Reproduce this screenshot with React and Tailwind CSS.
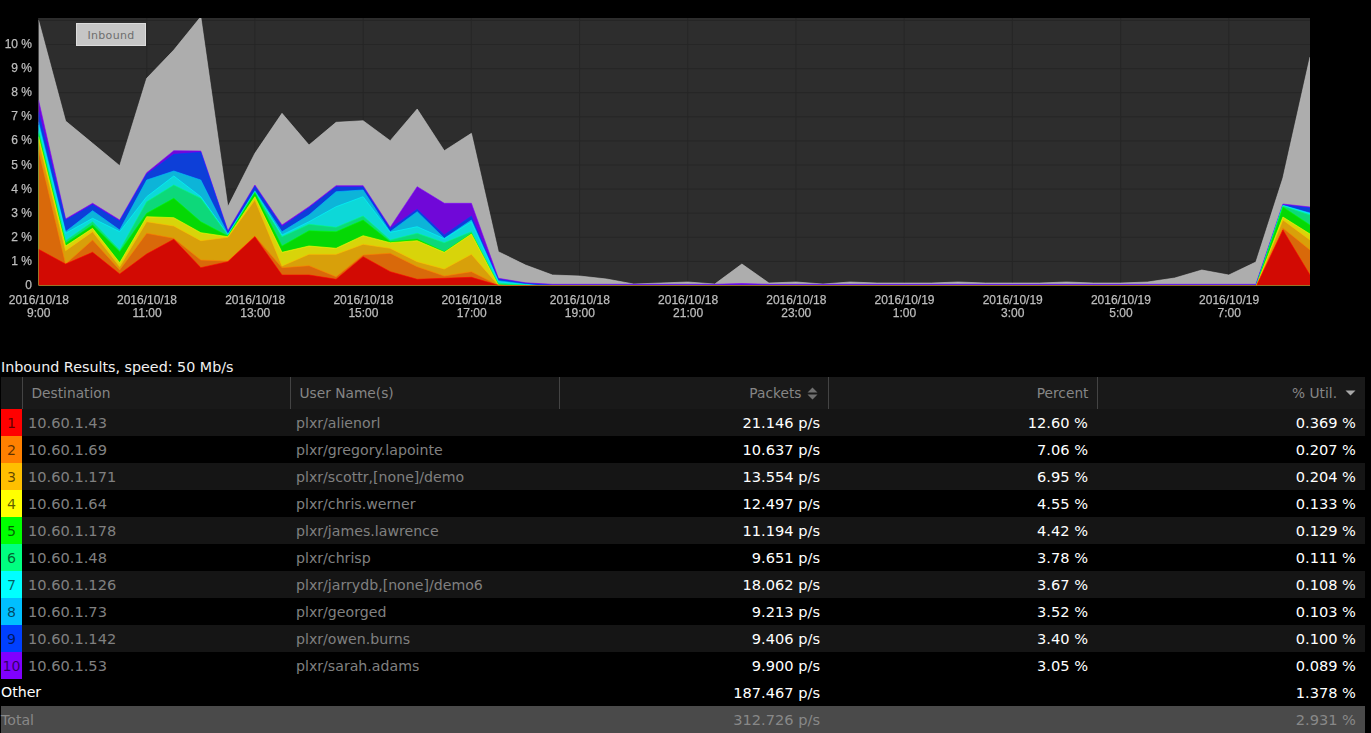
import React from "react";

const COLORS = [
  ["#d20a03", "#ff0000"],
  ["#d9690a", "#ff8000"],
  ["#d8a00a", "#ffbf00"],
  ["#d8d40a", "#ffff00"],
  ["#05d805", "#00ff00"],
  ["#0dd87a", "#00ff80"],
  ["#0dd8d8", "#00ffff"],
  ["#0db4d8", "#00bfff"],
  ["#0d3fd8", "#0040ff"],
  ["#7008d8", "#8000ff"],
  ["#adadad", "#c4c4c4"],
];

const Z = [
  [748, 450, 420, 410, 400, 392, 375, 365, 335, 300, 60],
  [792, 792, 752, 738, 730, 722, 700, 695, 661, 657, 363],
  [757, 720, 695, 685, 675, 665, 655, 632, 614, 610, 430],
  [822, 810, 800, 788, 755, 750, 695, 690, 664, 660, 497],
  [762, 700, 665, 650, 640, 605, 590, 540, 523, 518, 235],
  [718, 715, 678, 653, 595, 555, 528, 513, 463, 452, 150],
  [803, 780, 722, 698, 665, 595, 590, 540, 457, 453, 50],
  [785, 783, 712, 710, 708, 706, 704, 702, 696, 692, 620],
  [710, 708, 600, 590, 578, 576, 575, 572, 559, 555, 460],
  [825, 803, 798, 757, 738, 710, 705, 695, 680, 675, 340],
  [825, 797, 763, 738, 692, 673, 665, 645, 624, 620, 435],
  [838, 830, 763, 745, 695, 682, 620, 575, 561, 557, 367],
  [770, 765, 733, 707, 660, 648, 590, 570, 561, 557, 362],
  [815, 760, 745, 728, 725, 720, 697, 695, 686, 682, 422],
  [838, 800, 785, 722, 717, 700, 680, 635, 628, 560, 327],
  [835, 828, 807, 757, 755, 728, 716, 715, 705, 610, 452],
  [832, 815, 763, 702, 700, 695, 665, 660, 648, 610, 400],
  [856, 856, 856, 856, 855, 850, 845, 842, 838, 835, 755],
].map((r) => r.map((v) => v / 3));

const low = (g, p = 284.3) => [287, 287, 287, 287, 287, 287, 287, 287, 285.2, p, g];
const GREY_TAIL = [
  265, 275, 276, 279, 284, 283, 282, 284, 264, 283, 282, 284, 282, 283, 283, 283, 282, 283, 283, 283, 282, 283, 283,
  282, 278, 270, 275, 262,
];
const TAIL = GREY_TAIL.map((g, i) =>
  i === 0 ? [286, 286, 286, 286, 285.4, 285, 284.6, 284.2, 283.4, 282.8, g] : low(g, i === 8 ? 283.5 : 284.3)
);
const END = [
  [230, 228, 220, 217, 207, 206, 205.6, 205.3, 205, 204, 178],
  [275, 250, 240, 234, 225, 215, 213.5, 213, 208, 207, 57],
];
const DATA = [...Z, ...TAIL, ...END];
const X0 = 38.5;
const X1 = 1310;
const xAt = (i) => X0 + ((X1 - X0) * i) / 47;
const Y0 = 285.5;

const TIMES = [
  ["2016/10/18", "9:00"],
  ["2016/10/18", "11:00"],
  ["2016/10/18", "13:00"],
  ["2016/10/18", "15:00"],
  ["2016/10/18", "17:00"],
  ["2016/10/18", "19:00"],
  ["2016/10/18", "21:00"],
  ["2016/10/18", "23:00"],
  ["2016/10/19", "1:00"],
  ["2016/10/19", "3:00"],
  ["2016/10/19", "5:00"],
  ["2016/10/19", "7:00"],
];

function Chart() {
  return (
    <div className="relative h-[358px] w-[1371px]">
      <svg width="1371" height="358" className="block blur-[0.35px]">
        <defs>
          <clipPath id="plot">
            <rect x={X0} y="18" width={X1 - X0} height={Y0 - 18} />
          </clipPath>
        </defs>
        <rect x={X0} y="18" width={X1 - X0} height={Y0 - 18} fill="#2d2d2d" />
        {Array.from({ length: 11 }, (_, i) => (
          <line key={i} x1={X0} x2={X1} y1={Y0 - 24.1 * (i + 1)} y2={Y0 - 24.1 * (i + 1)} stroke="#262626" />
        ))}
        {TIMES.map((_, i) => (
          <line key={i} x1={xAt(i * 4)} x2={xAt(i * 4)} y1="18" y2={Y0} stroke="#262626" />
        ))}
        <g clipPath="url(#plot)">
          {[10, 9, 8, 7, 6, 5, 4, 3, 2, 1, 0].map((l) => {
            const top = DATA.map((d, i) => `${xAt(i).toFixed(1)},${d[l].toFixed(1)}`).join(" ");
            return (
              <g key={l}>
                <polygon points={`${X0},${Y0} ${top} ${X1},${Y0}`} fill={COLORS[l][0]} />
                <polyline points={top} fill="none" stroke={COLORS[l][1]} strokeWidth="1" strokeOpacity="0.6" />
              </g>
            );
          })}
        </g>
        <g fontFamily="'Liberation Sans', Arial, sans-serif" fontSize="12" fill="#bdbdbd" stroke="#bdbdbd" strokeWidth="0.25">
          {Array.from({ length: 11 }, (_, i) => (
            <text key={i} x="32" y={Y0 - 24.1 * i + 3.5} textAnchor="end">
              {i === 0 ? "0" : `${i} %`}
            </text>
          ))}
          {TIMES.map(([d, t], i) => (
            <text key={i} x={xAt(i * 4) + 0.3} textAnchor="middle">
              <tspan x={xAt(i * 4) + 0.3} y="304">{d}</tspan>
              <tspan x={xAt(i * 4) + 0.3} y="317">{t}</tspan>
            </text>
          ))}
        </g>
      </svg>
      <div className="absolute left-[76px] top-[23px] flex h-[23px] w-[70px] items-center justify-center border border-[#dcdcdc] bg-[#c6c6c6] pt-[3px] text-[11px] tracking-[0.3px] text-[#6e6e6e]">
        Inbound
      </div>
    </div>
  );
}

const ROWS = [
  ["10.60.1.43", "plxr/alienorl", "21.146 p/s", "12.60 %", "0.369 %"],
  ["10.60.1.69", "plxr/gregory.lapointe", "10.637 p/s", "7.06 %", "0.207 %"],
  ["10.60.1.171", "plxr/scottr,[none]/demo", "13.554 p/s", "6.95 %", "0.204 %"],
  ["10.60.1.64", "plxr/chris.werner", "12.497 p/s", "4.55 %", "0.133 %"],
  ["10.60.1.178", "plxr/james.lawrence", "11.194 p/s", "4.42 %", "0.129 %"],
  ["10.60.1.48", "plxr/chrisp", "9.651 p/s", "3.78 %", "0.111 %"],
  ["10.60.1.126", "plxr/jarrydb,[none]/demo6", "18.062 p/s", "3.67 %", "0.108 %"],
  ["10.60.1.73", "plxr/georged", "9.213 p/s", "3.52 %", "0.103 %"],
  ["10.60.1.142", "plxr/owen.burns", "9.406 p/s", "3.40 %", "0.100 %"],
  ["10.60.1.53", "plxr/sarah.adams", "9.900 p/s", "3.05 %", "0.089 %"],
];

const SortBoth = () => (
  <svg width="11" height="13" viewBox="0 0 11 13" className="ml-[5px]">
    <path d="M5.5 0.5 L10.5 5.5 H0.5 Z M5.5 12.5 L10.5 7.5 H0.5 Z" fill="#707070" />
  </svg>
);
const SortDown = () => (
  <svg width="11" height="6" viewBox="0 0 11 6" className="ml-[8px]">
    <path d="M0.5 0.5 H10.5 L5.5 5.5 Z" fill="#a8a8a8" />
  </svg>
);

function Table() {
  return (
    <table className="ml-px w-[1364px] table-fixed border-collapse text-[14.15px]">
      <colgroup>
        <col className="w-[21px]" />
        <col className="w-[268px]" />
        <col className="w-[269px]" />
        <col className="w-[269px]" />
        <col className="w-[269px]" />
        <col className="w-[268px]" />
      </colgroup>
      <thead>
        <tr className="h-[32px] bg-[#191919] text-[13.75px] text-[#868686]">
          <th className="border-r border-[#444] p-0 font-normal"></th>
          <th className="border-r border-[#444] pl-[9px] text-left font-normal">Destination</th>
          <th className="border-r border-[#444] pl-[9px] text-left font-normal">User Name(s)</th>
          <th className="border-r border-[#444] pr-[10px] text-right font-normal">
            <span className="flex items-center justify-end">Packets<SortBoth /></span>
          </th>
          <th className="border-r border-[#444] pr-[8px] text-right font-normal">Percent</th>
          <th className="pr-[9px] text-right font-normal">
            <span className="flex items-center justify-end">% Util.<SortDown /></span>
          </th>
        </tr>
      </thead>
      <tbody>
        {ROWS.map((r, i) => (
          <tr key={i} className={`h-[27px] ${i % 2 === 0 ? "bg-[#151515]" : "bg-black"}`}>
            <td className="overflow-hidden p-0 pt-[2px] text-center text-[#000000a0]" style={{ backgroundColor: COLORS[i][1] }}>
              {i + 1}
            </td>
            <td className="pl-[6px] text-[14.6px] text-[#808080]">{r[0]}</td>
            <td className="pl-[6px] pt-[2px] text-[#808080]">{r[1]}</td>
            <td className="pr-[8px] text-right text-[14.6px] text-white">{r[2]}</td>
            <td className="pr-[9px] text-right text-[14.6px] text-white">{r[3]}</td>
            <td className="pr-[9px] text-right text-[14.6px] text-white">{r[4]}</td>
          </tr>
        ))}
        <tr className="h-[27px] bg-black text-white">
          <td colSpan="3" className="p-0">Other</td>
          <td className="pr-[8px] text-right text-[14.6px]">187.467 p/s</td>
          <td></td>
          <td className="pr-[9px] text-right text-[14.6px]">1.378 %</td>
        </tr>
        <tr className="h-[27px] bg-[#4a4a4a] text-[#888]">
          <td colSpan="3" className="p-0 pt-[2px]">Total</td>
          <td className="pr-[8px] text-right text-[14.6px]">312.726 p/s</td>
          <td></td>
          <td className="pr-[9px] text-right text-[14.6px]">2.931 %</td>
        </tr>
      </tbody>
    </table>
  );
}

export default function App() {
  return (
    <div className="h-[733px] w-[1371px] overflow-hidden bg-black font-['DejaVu_Sans',Verdana,sans-serif]">
      <Chart />
      <div className="flex h-[19px] items-center pl-px text-[14.3px] text-[#f0f0f0]">Inbound Results, speed: 50 Mb/s</div>
      <Table />
    </div>
  );
}
